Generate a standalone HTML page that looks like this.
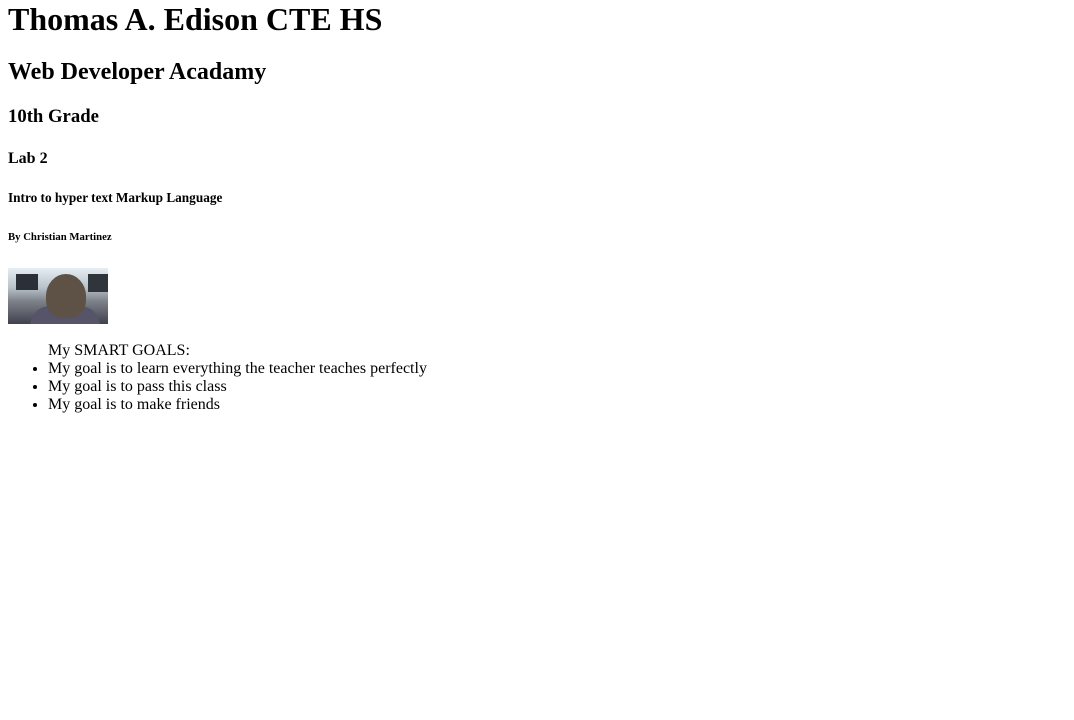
<!DOCTYPE html>
<html><head><style>
body{margin:1px 8px 8px;font-family:"Liberation Serif",serif;color:#000;background:#fff}
h1{margin-top:0}
ul{margin-top:18px}
.img{display:block;width:100px;height:56px;background:linear-gradient(180deg,#e6eef4 0%,#b9c2ca 35%,#7c8088 60%,#40414e 100%);position:relative;overflow:hidden}
.img .h{position:absolute;left:38px;top:6px;width:40px;height:44px;border-radius:50% 50% 40% 40%;background:#5e5246}
.img .m1{position:absolute;left:8px;top:6px;width:22px;height:16px;background:#2a2f38}
.img .m2{position:absolute;left:80px;top:6px;width:20px;height:18px;background:#30353c}
.img .b{position:absolute;left:22px;top:38px;width:70px;height:22px;border-radius:20px 20px 0 0;background:#555468}
</style></head><body>
<h1>Thomas A. Edison CTE HS</h1>
<h2>Web Developer Acadamy</h2>
<h3>10th Grade</h3>
<h4>Lab 2</h4>
<h5>Intro to hyper text Markup Language</h5>
<h6>By Christian Martinez</h6>
<div class="img"><span class="m1"></span><span class="m2"></span><span class="b"></span><span class="h"></span></div>
<ul>My SMART GOALS:
<li>My goal is to learn everything the teacher teaches perfectly</li>
<li>My goal is to pass this class</li>
<li>My goal is to make friends</li>
</ul>
</body></html>
